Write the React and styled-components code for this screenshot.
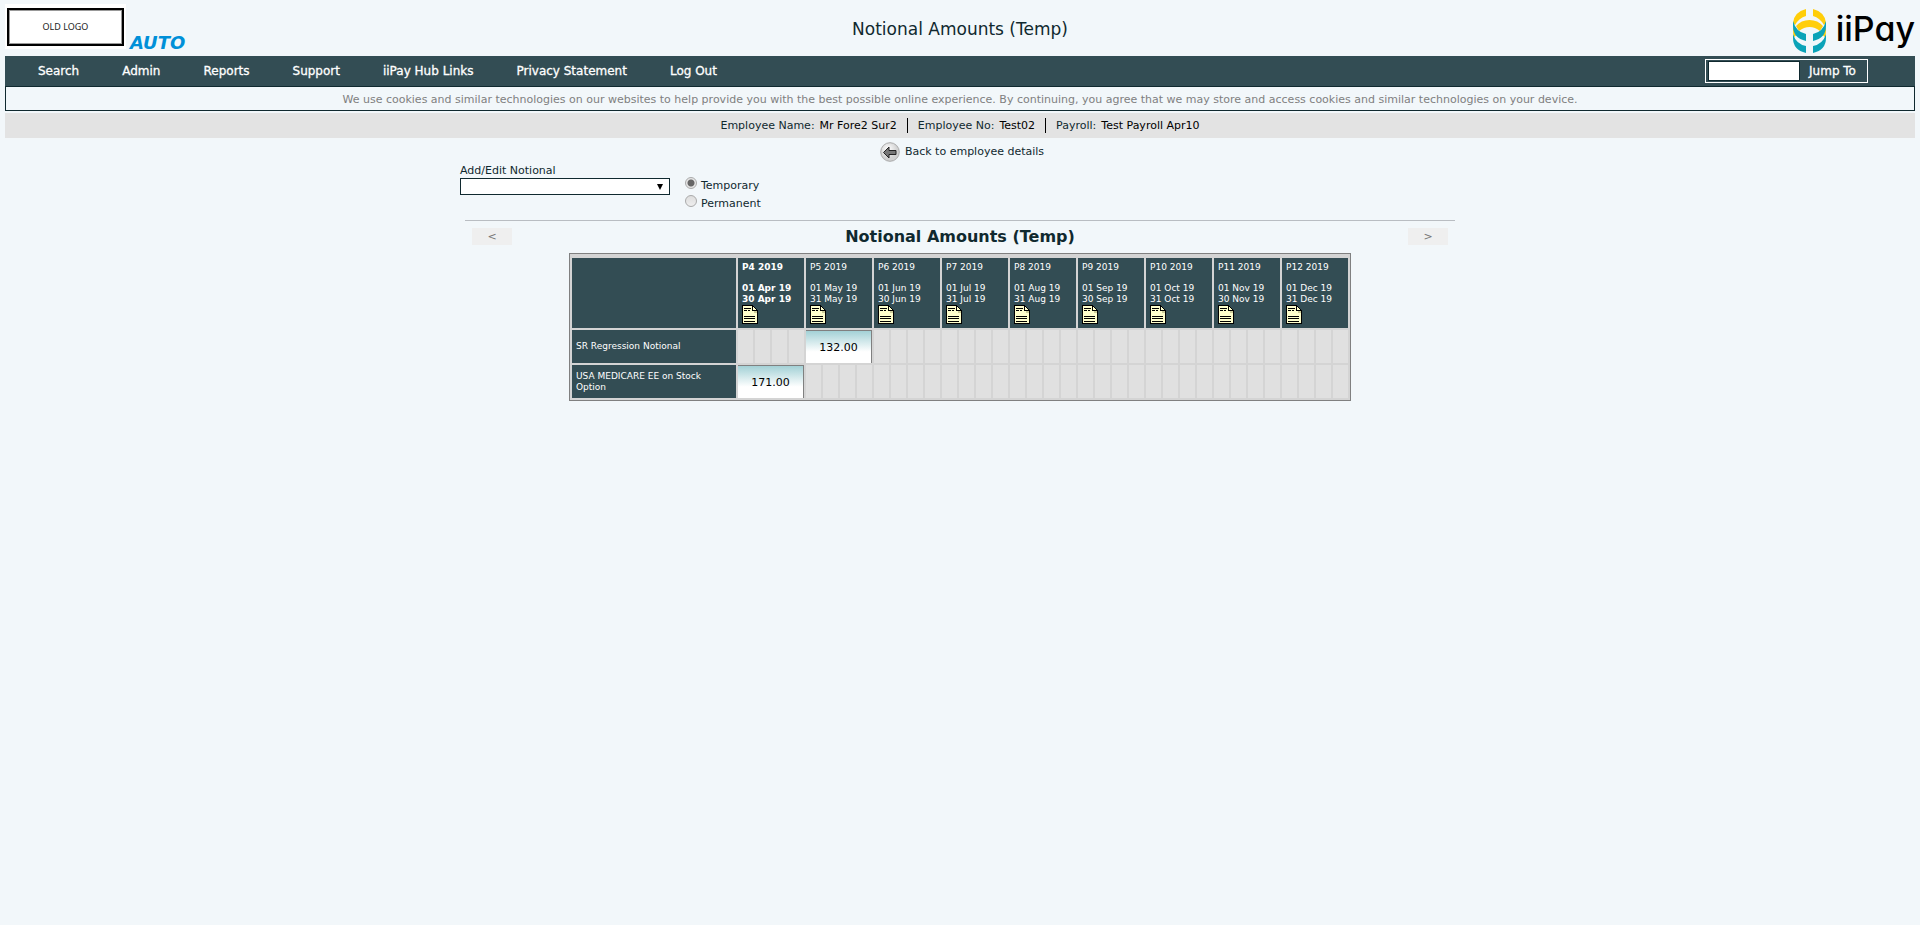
import React from "react";
import styled, { createGlobalStyle } from "styled-components";

const ink = "#10292f";
const slate = "#334d54";

const GlobalStyle = createGlobalStyle`
  *, *::before, *::after { box-sizing: border-box; }
  body {
    margin: 0;
    padding: 4px 5px 0;
    background: #f2f7fa;
    color: ${ink};
    font: 11px/14px Verdana, "DejaVu Sans", sans-serif;
  }
  button, input, select { font: inherit; color: inherit; }
`;

const Header = styled.header`
  display: grid;
  grid-template-columns: 1fr auto 1fr;
  height: 52px;
`;
const Brand = styled.div`
  display: flex;
  align-items: flex-start;
  gap: 4px;
`;
const OldLogo = styled.div`
  width: 121px;
  height: 45px;
  padding: 4px 2px 3px;
  background: #fff;
`;
const OldLogoFrame = styled.div`
  height: 38px;
  border: 2px solid #000;
  outline: 1px solid #999;
  outline-offset: -3px;
  color: #222;
  font: 9px/34px "Noto Sans", sans-serif;
  text-align: center;
`;
const Site = styled.span`
  padding-top: 28px;
  color: #0090d8;
  font-size: 18px;
  line-height: 22px;
  font-weight: bold;
  font-style: italic;
`;
const PageTitle = styled.h1`
  margin: 14px 0 0;
  font-size: 17px;
  line-height: 22px;
  font-weight: normal;
`;
const Company = styled.div`
  display: flex;
  justify-content: flex-end;
  align-items: flex-start;
  gap: 10px;
  padding-top: 5px;
`;
const CompanyName = styled.span`
  color: #000;
  font: 500 34px/40px Inter, sans-serif;
  font-feature-settings: "cv11";
`;

const Nav = styled.nav`
  display: flex;
  align-items: center;
  justify-content: space-between;
  height: 30px;
  padding: 0 47px 0 33px;
  background: ${slate};
`;
const Menu = styled.ul`
  display: flex;
  gap: 43px;
  margin: 0;
  padding: 0;
  list-style: none;
`;
const MenuLink = styled.a`
  color: #fff;
  font-size: 12px;
  line-height: 16px;
  -webkit-text-stroke: 0.3px #fff;
  text-decoration: none;
`;
const Jump = styled.form`
  display: flex;
  align-items: center;
  width: 163px;
  height: 24px;
  padding: 0 2px;
  border: 1px solid #fff;
`;
const JumpInput = styled.input`
  width: 92px;
  height: 20px;
  border: 1px solid ${ink};
  background: #fff;
`;
const JumpButton = styled.button`
  flex: 1;
  padding: 0;
  border: 0;
  background: none;
  color: #fff;
  font-size: 12px;
  -webkit-text-stroke: 0.3px #fff;
`;

const Cookies = styled.p`
  height: 25px;
  margin: 0 0 2px;
  border: 1px solid ${ink};
  color: #808080;
  line-height: 25px;
  text-align: center;
`;
const Employee = styled.dl`
  display: flex;
  justify-content: center;
  align-items: center;
  height: 25px;
  margin: 0;
  background: #e3e3e3;
`;
const Fact = styled.div`
  display: flex;
  gap: 5px;
  padding: 0 10px;
  line-height: 15px;
  & + & { border-left: 1px solid #000; }
`;
const FactName = styled.dt``;
const FactValue = styled.dd`
  margin: 0;
  color: #000;
`;

const Main = styled.main`
  max-width: 1000px;
  margin: 0 auto;
`;
const Back = styled.a`
  display: flex;
  justify-content: center;
  align-items: center;
  gap: 5px;
  height: 26px;
  padding: 1px 0 0 4px;
  color: inherit;
  text-decoration: none;
`;
const Filters = styled.div`
  display: flex;
  gap: 15px;
  height: 56px;
`;
const Field = styled.div`
  display: flex;
  flex-direction: column;
`;
const Label = styled.label`
  line-height: 14px;
`;
const SelectBox = styled.div`
  display: grid;
  align-items: center;
  justify-items: end;
  width: 210px;
  & > * { grid-area: 1 / 1; }
`;
const Select = styled.select`
  width: 100%;
  height: 17px;
  padding: 0 4px;
  border: 1px solid ${ink};
  border-radius: 0;
  background: #fff;
  appearance: none;
`;
const Arrow = styled.svg`
  margin-right: 7px;
  pointer-events: none;
`;
const Radios = styled.fieldset`
  display: flex;
  flex-direction: column;
  margin: 0;
  padding: 12px 0 0;
  border: 0;
`;
const RadioLabel = styled.label`
  display: flex;
  gap: 4px;
  height: 18px;
  line-height: 20px;
`;
const Radio = styled.input`
  width: 12px;
  height: 12px;
  margin: 1px 0 0;
  border: 1px solid #aaa;
  border-radius: 50%;
  background: linear-gradient(#ddd, #eee);
  appearance: none;
  &:checked { background: radial-gradient(circle, #666 3px, #e6e6e6 4px); }
`;
const Pager = styled.div`
  display: flex;
  justify-content: space-between;
  margin: 0 5px;
  padding: 7px 7px 0;
  height: 33px;
  border-top: 1px solid #b9bdc2;
`;
const PageButton = styled.button`
  width: 40px;
  height: 17px;
  padding: 0;
  border: 0;
  background: #efefef;
  color: #777;
`;
const Heading = styled.h2`
  margin: 0;
  font-size: 16px;
  line-height: 18px;
`;

const Grid = styled.table`
  table-layout: fixed;
  width: 782px;
  margin: 0 auto;
  padding-top: 2px;
  border: 1px solid #808080;
  border-collapse: separate;
  border-spacing: 2px;
  background: #d4d4d4;
  font-size: 9px;
  line-height: 11px;
`;
const NameCol = styled.col`
  width: 164px;
`;
const Corner = styled.td`
  background: ${slate};
`;
const HeadCell = styled.th`
  height: 70px;
  padding: 4px 4px 3px;
  background: ${slate};
  color: #fff;
  font-weight: ${(p) => (p.$current ? "bold" : "normal")};
  text-align: left;
  vertical-align: top;
  white-space: nowrap;
`;
const Dates = styled.div`
  margin-top: 10px;
`;
const NoteButton = styled.button`
  display: block;
  padding: 0;
  border: 0;
  background: none;
  & > svg { display: block; }
`;
const RowHead = styled.th`
  height: 33px;
  padding: 0 4px;
  background: ${slate};
  color: #fff;
  font-weight: normal;
  text-align: left;
`;
const EmptyCell = styled.td`
  padding: 0;
  background: #e0e0e0;
`;
const AmountCell = styled.td`
  padding: 0;
  border: solid #808080;
  border-width: 1px 1px 0 0;
  background: linear-gradient(#a3d1d6, #fff 65%);
  color: #000;
  font-size: 11px;
  text-align: center;
`;

const menu = ["Search", "Admin", "Reports", "Support", "iiPay Hub Links", "Privacy Statement", "Log Out"];
const facts = [
  ["Employee Name:", "Mr Fore2 Sur2"],
  ["Employee No:", "Test02"],
  ["Payroll:", "Test Payroll Apr10"],
];
const periods = [
  ["P4 2019", "01 Apr 19", "30 Apr 19"],
  ["P5 2019", "01 May 19", "31 May 19"],
  ["P6 2019", "01 Jun 19", "30 Jun 19"],
  ["P7 2019", "01 Jul 19", "31 Jul 19"],
  ["P8 2019", "01 Aug 19", "31 Aug 19"],
  ["P9 2019", "01 Sep 19", "30 Sep 19"],
  ["P10 2019", "01 Oct 19", "31 Oct 19"],
  ["P11 2019", "01 Nov 19", "30 Nov 19"],
  ["P12 2019", "01 Dec 19", "31 Dec 19"],
];
const rows = [
  { name: "SR Regression Notional", period: 1, amount: "132.00" },
  { name: "USA MEDICARE EE on Stock Option", period: 0, amount: "171.00" },
];
const weeks = [0, 1, 2, 3];

const CompanyMark = () => (
  <svg width="33" height="44" viewBox="0 0 33 44" aria-hidden="true">
    <g fill="#ffce0a">
      <path d="M13 0v7Q6 9 2 16L0 14Q1 3 13 0z" />
      <path d="M20 0v7Q27 9 31 16L33 14Q32 3 20 0z" />
      <path d="M3 17Q8 11 16.500 11T30 17L27 22Q22 18 16.500 18T6 22z" />
      <path d="M0 18Q1 22 5 25L1 28Q0 27 0 18zM33 18Q32 22 28 25L32 28Q33 27 33 18z" />
    </g>
    <g fill="#0ba3b8">
      <path d="M0 12Q3 23 13 25v7Q0 29 0 17z" />
      <path d="M33 12Q30 23 20 25v7Q33 29 33 17z" />
      <path d="M0 25Q3 35 13 37v7Q0 41 0 29z" />
      <path d="M33 25Q30 35 20 37v7Q33 41 33 29z" />
    </g>
  </svg>
);
const BackIcon = () => (
  <svg width="20" height="20" viewBox="0 0 20 20" aria-hidden="true">
    <defs>
      <radialGradient id="backFill" cx=".4" cy=".35">
        <stop offset="0" stopColor="#fff" />
        <stop offset="1" stopColor="#d0d0d0" />
      </radialGradient>
    </defs>
    <circle cx="10" cy="10" r="9.300" fill="url(#backFill)" stroke="#aaa" />
    <path d="M3.500 10.500 9 5v3.500h7v4H9V16z" fill="#777" stroke="#222" />
  </svg>
);
const NoteIcon = () => (
  <svg width="16" height="19" viewBox="0 0 16 19" shapeRendering="crispEdges" aria-hidden="true">
    <path d="M.5.500h10l5 5v13H.500z" fill="#ffffcc" stroke="#000" />
    <path d="M10.500 1v5h4.500v2h-3v-2h-2z" fill="#cccc99" />
    <path d="M10.500.500v5h5M2 3.500h7M2 5.500h3M6 5.500h2M2 11.500h11M2 13.500h11M2 16.500h11" fill="none" stroke="#000" />
  </svg>
);

export default function App() {
  return (
    <>
      <GlobalStyle />
      <Header>
        <Brand>
          <OldLogo><OldLogoFrame>OLD LOGO</OldLogoFrame></OldLogo>
          <Site>AUTO</Site>
        </Brand>
        <PageTitle>Notional Amounts (Temp)</PageTitle>
        <Company><CompanyMark /><CompanyName>iiPay</CompanyName></Company>
      </Header>
      <Nav>
        <Menu>{menu.map((m) => <li key={m}><MenuLink href="#">{m}</MenuLink></li>)}</Menu>
        <Jump>
          <JumpInput type="text" aria-label="Jump to" />
          <JumpButton type="button">Jump To</JumpButton>
        </Jump>
      </Nav>
      <Cookies>
        We use cookies and similar technologies on our websites to help provide you with the best possible online experience. By continuing, you agree that we may store and access cookies and similar technologies on your device.
      </Cookies>
      <Employee>
        {facts.map(([name, value]) => (
          <Fact key={name}><FactName>{name}</FactName><FactValue>{value}</FactValue></Fact>
        ))}
      </Employee>
      <Main>
        <Back href="#"><BackIcon />Back to employee details</Back>
        <Filters>
          <Field>
            <Label htmlFor="notional">Add/Edit Notional</Label>
            <SelectBox>
              <Select id="notional"><option></option></Select>
              <Arrow width="6" height="6" viewBox="0 0 6 6" aria-hidden="true"><path d="M0 0h6L3 6z" /></Arrow>
            </SelectBox>
          </Field>
          <Radios aria-label="Notional type">
            <RadioLabel><Radio type="radio" name="kind" defaultChecked />Temporary</RadioLabel>
            <RadioLabel><Radio type="radio" name="kind" />Permanent</RadioLabel>
          </Radios>
        </Filters>
        <Pager>
          <PageButton type="button" aria-label="Previous periods">&lt;</PageButton>
          <Heading>Notional Amounts (Temp)</Heading>
          <PageButton type="button" aria-label="Next periods">&gt;</PageButton>
        </Pager>
        <Grid>
          <colgroup>
            <NameCol />
            <col span={36} />
          </colgroup>
          <thead>
            <tr>
              <Corner />
              {periods.map(([name, from, to], i) => (
                <HeadCell key={name} colSpan={4} scope="col" $current={i === 0}>
                  {name}
                  <Dates>{from}<br />{to}</Dates>
                  <NoteButton type="button" aria-label={`Notes for ${name}`}><NoteIcon /></NoteButton>
                </HeadCell>
              ))}
            </tr>
          </thead>
          <tbody>
            {rows.map((row) => (
              <tr key={row.name}>
                <RowHead scope="row">{row.name}</RowHead>
                {periods.map(([name], i) =>
                  i === row.period
                    ? <AmountCell key={name} colSpan={4}>{row.amount}</AmountCell>
                    : weeks.map((w) => <EmptyCell key={name + w} />)
                )}
              </tr>
            ))}
          </tbody>
        </Grid>
      </Main>
    </>
  );
}
